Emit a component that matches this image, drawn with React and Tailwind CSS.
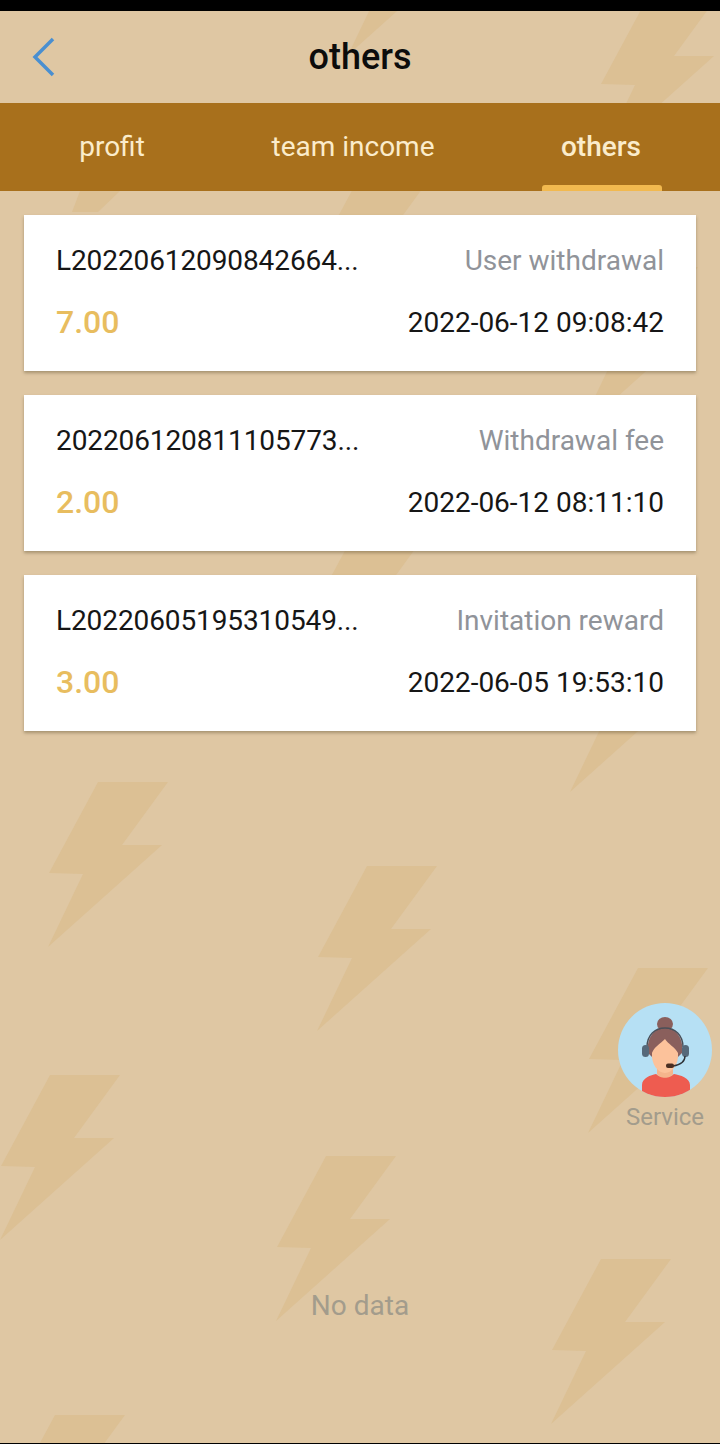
import React from "react";

// Background lightning bolts (x, y of each bolt's bounding box)
const bolts = [
  [600, -7], [348, -110], [305, 185], [578, 267], [298, 545], [570, 627],
  [48, 782], [317, 866], [588, 968], [0, 1075], [276, 1156], [551, 1259], [5, 1415],
];

const records = [
  { id: "L20220612090842664...", type: "User withdrawal", amount: "7.00", time: "2022-06-12 09:08:42" },
  { id: "202206120811105773...", type: "Withdrawal fee", amount: "2.00", time: "2022-06-12 08:11:10" },
  { id: "L20220605195310549...", type: "Invitation reward", amount: "3.00", time: "2022-06-05 19:53:10" },
];

function BoltBackground() {
  return (
    <svg className="absolute inset-0" width="720" height="1444" viewBox="0 0 720 1444">
      {bolts.map(([x, y]) => (
        <polygon
          key={`${x}-${y}`}
          transform={`translate(${x} ${y})`}
          points="50,0 120,0 74,63 114,63 0,165 35,92 1,91"
          fill="#dcc094"
        />
      ))}
      {/* tail of a bolt that is hidden behind the tab bar */}
      <polygon points="80,191 120,191 98,212 72,212" fill="#dcc094" />
    </svg>
  );
}

function ServiceAvatar() {
  return (
    <svg width="94" height="94" viewBox="0 0 94 94">
      <defs>
        <clipPath id="avatarClip">
          <circle cx="47" cy="47" r="47" />
        </clipPath>
      </defs>
      <circle cx="47" cy="47" r="47" fill="#b6e0f4" />
      <g clipPath="url(#avatarClip)">
        {/* body */}
        <path d="M24 94 V82 C24 75 33 72 38 71 C42 75 52 75 56 71 C62 72 72 75 72 82 V94 Z" fill="#ee5c50" />
        <path d="M39 62 H55 V71 C53 76 41 76 39 71 Z" fill="#f5b48c" />
        {/* hair */}
        <ellipse cx="47" cy="21" rx="8" ry="7" fill="#8a5f5c" />
        <path d="M30 50 C28 35 36 25 47 25 C58 25 66 35 64 50 L58 56 H36 Z" fill="#8a5f5c" />
        {/* face */}
        <path d="M34 50 C36 44 42 41 47 36 C50 41 57 44 60 50 C61 61 54 70 47 70 C40 70 33 61 34 50 Z" fill="#fcc29b" />
        {/* headset */}
        <path d="M29 44 C29 32 37 25 47 25 C57 25 65 32 65 44" fill="none" stroke="#4a4f58" strokeWidth="1.4" />
        <rect x="24" y="42" width="7" height="12" rx="3.5" fill="#56697a" />
        <rect x="64" y="42" width="7" height="12" rx="3.5" fill="#56697a" />
        <path d="M67 53 C67 59 62 62 55 63" fill="none" stroke="#2f3338" strokeWidth="1.4" />
        <rect x="48" y="60.5" width="8" height="4.5" rx="2" fill="#4a2e22" />
      </g>
    </svg>
  );
}

export default function App() {
  return (
    <div className="relative flex h-[1444px] w-[720px] flex-col overflow-hidden bg-[#dfc7a3] font-['Roboto',sans-serif]">
      <BoltBackground />

      <div className="relative h-[11px] bg-black" />

      {/* Header */}
      <div className="relative flex h-[92px] items-center justify-center">
        <svg className="absolute left-[30px] top-[24px]" width="28" height="44" viewBox="0 0 28 44">
          <path d="M23 4 L5 22 L23 40" fill="none" stroke="#4a8fd0" strokeWidth="3.5" />
        </svg>
        <h1 className="text-[36px] font-medium leading-none text-[#0c0c0c]">others</h1>
      </div>

      {/* Tabs */}
      <div className="relative grid h-[88px] grid-cols-[224px_258px_238px] bg-[#a8701c] text-[28px] text-[#fbeccb]">
        <div className="flex items-center justify-center">profit</div>
        <div className="flex items-center justify-center">team income</div>
        <div className="relative flex items-center justify-center font-medium">
          others
          <div className="absolute bottom-0 left-[60px] h-[6px] w-[120px] rounded-t-[3px] bg-[#f2b94f]" />
        </div>
      </div>

      {/* Record list */}
      <div className="relative flex flex-col gap-6 px-6 pt-6">
        {records.map((record) => (
          <div
            key={record.id}
            className="flex h-[156px] flex-col gap-7 bg-white px-8 pt-[29px] shadow-[0_2px_3px_rgba(60,50,20,0.35)]"
          >
            <div className="flex h-[34px] items-center justify-between text-[28px]">
              <span className="tracking-[-0.1px] text-[#161616]">{record.id}</span>
              <span className="text-[#909399]">{record.type}</span>
            </div>
            <div className="flex h-[34px] items-center justify-between">
              <span className="mb-[2px] text-[32px] font-medium text-[#e8bd5f]">{record.amount}</span>
              <span className="text-[28px] text-[#161616]">{record.time}</span>
            </div>
          </div>
        ))}
      </div>

      <div className="relative mt-[558px] text-center text-[28px] leading-[34px] text-[#a39c8c]">No data</div>

      {/* Floating service button */}
      <div className="absolute left-[618px] top-[1003px] flex w-[94px] flex-col items-center">
        <ServiceAvatar />
        <span className="mt-[4px] text-[24px] leading-[32px] text-[#a39c8c]">Service</span>
      </div>

      <div className="absolute bottom-0 h-px w-full bg-black" />
    </div>
  );
}
